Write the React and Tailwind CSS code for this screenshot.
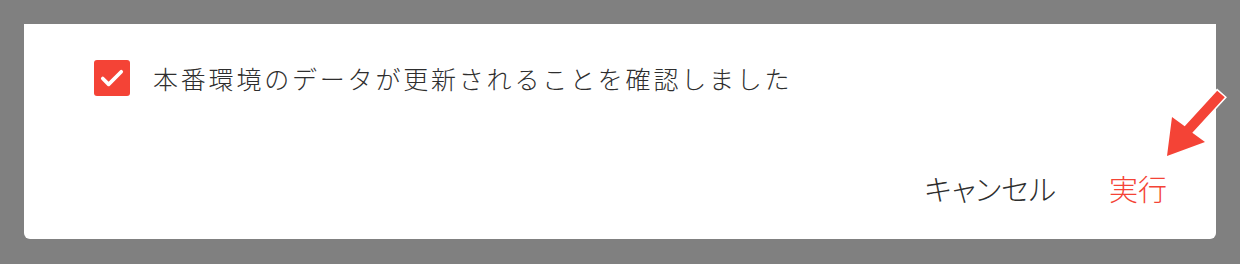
import { useState } from "react";

const CheckIcon = () => (
  <svg viewBox="0 0 24 24" className="w-[30px] h-[30px]" fill="none">
    <path d="M4.6 12.4l4.7 4.7L19.4 7" stroke="white" strokeWidth="2.9" strokeLinecap="round" strokeLinejoin="round" />
  </svg>
);

// annotation arrow pointing at the confirm button
const PointerArrow = () => (
  <svg
    viewBox="0 0 90 90"
    className="absolute left-[1150px] top-[80px] w-[90px] h-[90px] pointer-events-none"
  >
    <polygon
      points="17,76 22,37 34.7,46.2 67.2,10.7 74.8,17.3 42.3,52.8 55,62"
      fill="#f44336"
      stroke="white"
      strokeWidth="3"
      strokeLinejoin="miter"
      paintOrder="stroke"
    />
  </svg>
);

export default function App() {
  const [checked, setChecked] = useState(true);

  return (
    <div className="relative h-[264px] w-[1240px] bg-[#808080] p-6 font-['Noto_Sans_CJK_JP','Noto_Sans',sans-serif] font-light">
      <div className="h-[215px] bg-white rounded-b-md flex flex-col">
        <label className="flex items-center mt-9 ml-[70px] cursor-pointer">
          <button
            type="button"
            onClick={() => setChecked(!checked)}
            className={`w-9 h-9 rounded-[3px] flex items-center justify-center ${checked ? 'bg-[#f44336]' : 'border-2 border-gray-400'}`}
          >
            {checked && <CheckIcon />}
          </button>
          <span className="ml-[23px] text-[25px] tracking-[2.8px] text-[#2e2e2e] leading-none">
            本番環境のデータが更新されることを確認しました
          </span>
        </label>
        <div className="flex justify-end items-center mt-auto mb-[36px] mr-[49px] gap-[53px] text-[29px] leading-none [font-feature-settings:'palt']">
          <button type="button" className="text-[#2e2e2e]">キャンセル</button>
          <button type="button" className="text-[#f44336]">実行</button>
        </div>
      </div>
      <PointerArrow />
    </div>
  );
}
